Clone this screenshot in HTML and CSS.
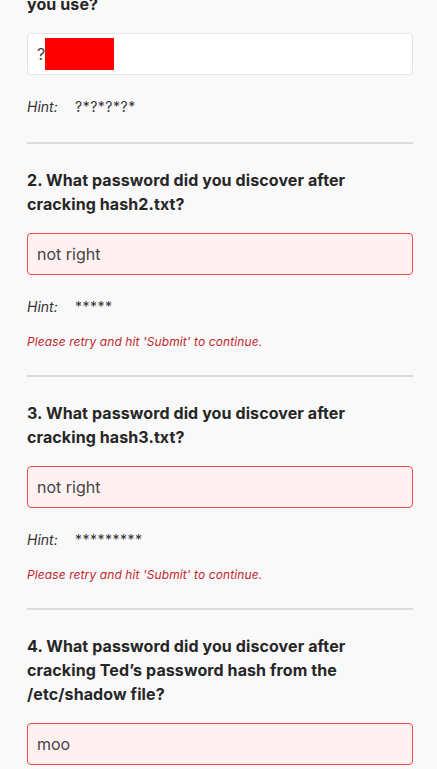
FILE: index.html
```html
<!DOCTYPE html>
<html>
<head>
<meta charset="utf-8">
<link rel="stylesheet" href="styles.css">
</head>
<body>
<main class="quiz">
  <section class="question first">
    <h2 class="q-title">you use?</h2>
    <div class="answer">?<span class="redact"></span></div>
    <div class="hint"><span class="hint-label">Hint:</span><span class="hint-value">?*?*?*?*</span></div>
  </section>
  <section class="question">
    <h2 class="q-title">2. What password did you discover after cracking hash2.txt?</h2>
    <div class="answer wrong">not right</div>
    <div class="hint"><span class="hint-label">Hint:</span><span class="hint-value">*****</span></div>
    <p class="error">Please retry and hit 'Submit' to continue.</p>
  </section>
  <section class="question">
    <h2 class="q-title">3. What password did you discover after cracking hash3.txt?</h2>
    <div class="answer wrong">not right</div>
    <div class="hint"><span class="hint-label">Hint:</span><span class="hint-value">*********</span></div>
    <p class="error">Please retry and hit 'Submit' to continue.</p>
  </section>
  <section class="question last">
    <h2 class="q-title">4. What password did you discover after cracking Ted’s password hash from the /etc/shadow file?</h2>
    <div class="answer wrong">moo</div>
  </section>
</main>
</body>
</html>
```
FILE: styles.css
```css
html, body {
  margin: 0;
  padding: 0;
  background: #f9f9f9;
  overflow: hidden;
}
body {
  font-family: Inter, "Noto Sans", sans-serif;
  color: #2b2b2b;
}
.quiz {
  padding: 0 24px 0 27px;
}
.question {
  padding: 24px 0 25px;
  border-bottom: 2px solid #dcdcdc;
}
.question.first {
  padding-top: 0;
  margin-top: -8px;
}
.question.last {
  border-bottom: none;
}
.q-title {
  margin: 0 0 17px;
  font-size: 16px;
  line-height: 24px;
  font-weight: 700;
  letter-spacing: 0.1px;
  color: #262626;
  padding-right: 40px;
}
.answer {
  height: 42px;
  box-sizing: border-box;
  border: 1px solid #e6e6e6;
  border-radius: 4px;
  background: #ffffff;
  padding: 0 9px;
  display: flex;
  align-items: center;
  font-size: 16px;
  color: #444;
}
.answer.wrong {
  border-color: #ef4a4a;
  background: #fff1f1;
}
.redact {
  display: inline-block;
  width: 69px;
  height: 32px;
  background: #ff0000;
}
.hint {
  margin-top: 22px;
  display: flex;
  font-size: 14px;
  line-height: 20px;
  color: #333;
}
.hint-label {
  font-style: italic;
  width: 48px;
}
.hint-value {
  letter-spacing: 0.5px;
}
.error {
  margin: 17px 0 0;
  font-size: 12px;
  line-height: 16px;
  font-style: italic;
  letter-spacing: 0.1px;
  color: #c4262e;
}
```
